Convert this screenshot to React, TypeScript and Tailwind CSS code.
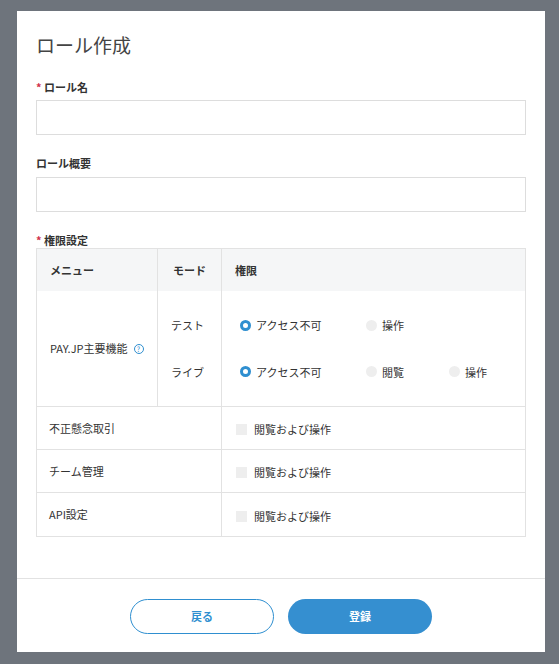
import React from "react";

const font = { fontFamily: '"Noto Sans CJK JP", "Noto Sans", sans-serif' };

function Radio({ on, label }: { on?: boolean; label: string }) {
  return (
    <div className="flex items-center gap-[5px]">
      {on ? (
        <span className="w-[11px] h-[11px] rounded-full border-[3px] border-[#2f8fd0] bg-white" />
      ) : (
        <span className="w-[11px] h-[11px] rounded-full bg-[#eeeeee]" />
      )}
      <span>{label}</span>
    </div>
  );
}

function Check() {
  return (
    <div className="flex items-center gap-[7px] pl-[14px]">
      <span className="w-[11px] h-[11px] bg-[#eeeeee]" />
      <span>閲覧および操作</span>
    </div>
  );
}

export default function App() {
  return (
    <div style={font} className="w-[559px] h-[664px] bg-[#6e747c] pt-[11px] pl-[17px] overflow-hidden">
      <div className="w-[528px] h-[641px] bg-white flex flex-col text-[#333]">
        <div className="px-[19px] pt-[21px] flex-1">
          <h1 className="text-[19px] leading-[26px] text-[#444]">ロール作成</h1>
          <div className="mt-[22px] text-[11px] font-bold leading-[14px]"><span className="text-[#d0314b]">* </span>ロール名</div>
          <div className="mt-[6px] h-[35px] border border-[#dddddd]" />
          <div className="mt-[21px] text-[11px] font-bold leading-[14px]">ロール概要</div>
          <div className="mt-[7px] h-[35px] border border-[#dddddd]" />
          <div className="mt-[21px] text-[11px] font-bold leading-[14px]"><span className="text-[#d0314b]">* </span>権限設定</div>
          <div className="mt-[1px] border border-[#e2e2e2] text-[11px]">
            <div className="flex h-[42px] bg-[#f5f6f7] font-bold items-center">
              <div className="w-[121px] pl-[13px] h-full flex items-center border-r border-[#e2e2e2]">メニュー</div>
              <div className="w-[64px] pl-[15px] h-full flex items-center border-r border-[#e2e2e2]">モード</div>
              <div className="pl-[13px]">権限</div>
            </div>
            <div className="flex h-[116px] border-b border-[#e2e2e2]">
              <div className="w-[121px] pl-[13px] flex items-center gap-[6px] border-r border-[#e2e2e2]">
                PAY.JP主要機能
                <span className="w-[10px] h-[10px] rounded-full border border-[#2f8fd0] text-[#2f8fd0] text-[7px] leading-[8px] flex items-center justify-center">?</span>
              </div>
              <div className="w-[64px] pl-[13px] flex flex-col justify-center gap-[30px] border-r border-[#e2e2e2]">
                <div>テスト</div>
                <div>ライブ</div>
              </div>
              <div className="flex-1 pl-[18px] flex flex-col justify-center gap-[30px]">
                <div className="flex">
                  <div className="w-[126px]"><Radio on label="アクセス不可" /></div>
                  <Radio label="操作" />
                </div>
                <div className="flex">
                  <div className="w-[126px]"><Radio on label="アクセス不可" /></div>
                  <div className="w-[83px]"><Radio label="閲覧" /></div>
                  <Radio label="操作" />
                </div>
              </div>
            </div>
            {["不正懸念取引", "チーム管理", "API設定"].map((t, i) => (
              <div key={t} className={`flex h-[43px] items-stretch ${i < 2 ? "border-b border-[#e2e2e2]" : ""}`}>
                <div className="w-[185px] pl-[12px] flex items-center border-r border-[#e2e2e2]">{t}</div>
                <div className="flex items-center pt-[3px]"><Check /></div>
              </div>
            ))}
          </div>
        </div>
        <div className="h-[74px] border-t border-[#e2e2e2] flex justify-center items-start pt-[20px] gap-[14px] text-[11px] font-bold">
          <button className="w-[144px] h-[35px] rounded-full border border-[#2f8fd0] text-[#2f8fd0]">戻る</button>
          <button className="w-[144px] h-[35px] rounded-full bg-[#358fd0] text-white">登録</button>
        </div>
      </div>
    </div>
  );
}
